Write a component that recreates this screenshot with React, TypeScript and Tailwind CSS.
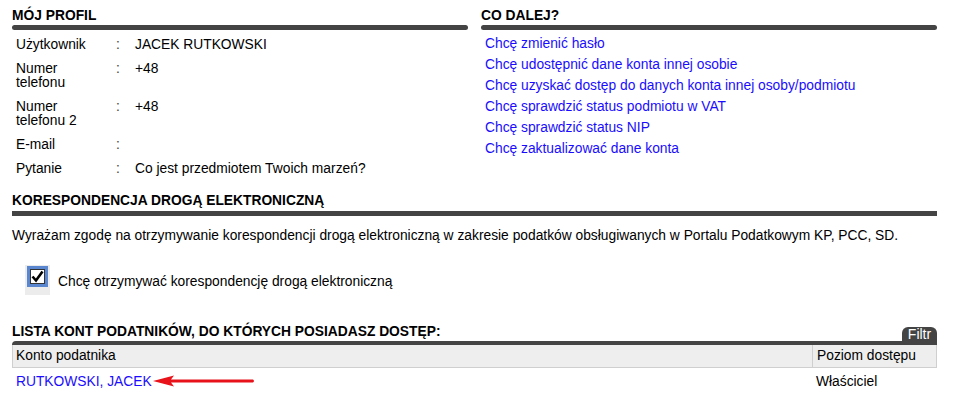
import React from "react";

const links = [
  "Chcę zmienić hasło",
  "Chcę udostępnić dane konta innej osobie",
  "Chcę uzyskać dostęp do danych konta innej osoby/podmiotu",
  "Chcę sprawdzić status podmiotu w VAT",
  "Chcę sprawdzić status NIP",
  "Chcę zaktualizować dane konta",
];

const profile: [string, string][] = [
  ["Użytkownik", "JACEK RUTKOWSKI"],
  ["Numer telefonu", "+48"],
  ["Numer telefonu 2", "+48"],
  ["E-mail", ""],
  ["Pytanie", "Co jest przedmiotem Twoich marzeń?"],
];

function Heading({ children }: { children: React.ReactNode }) {
  return <div className="text-[13.8px] leading-[15px] font-bold text-black whitespace-nowrap">{children}</div>;
}

export default function App() {
  return (
    <div
      className="bg-white w-[974px] h-[419px] text-[13.8px] text-black"
      style={{ fontFamily: '"Liberation Sans", Arial, sans-serif' }}
    >
      <div className="ml-[12px] w-[925px] pt-[8px]">
        <div className="grid grid-cols-[456px_456px] gap-x-[13px]">
          <div>
            <Heading>MÓJ PROFIL</Heading>
            <div className="mt-[2px] h-[5px] rounded-full bg-[#444]" />
            <div className="mt-[3px] grid grid-cols-[104px_19px_1fr]">
              {profile.map(([k, v]) => (
                <React.Fragment key={k}>
                  <div className="pl-[4px] pr-[8px] py-[5px] leading-[14px]">{k}</div>
                  <div className="py-[5px] leading-[14px] text-[#444]">:</div>
                  <div className="py-[5px] leading-[14px]">{v}</div>
                </React.Fragment>
              ))}
            </div>
          </div>
          <div>
            <Heading>CO DALEJ?</Heading>
            <div className="mt-[2px] h-[5px] rounded-full bg-[#444]" />
            <div className="mt-[3px] pl-[4px] flex flex-col items-start">
              {links.map((l) => (
                <a key={l} href="#" className="text-[#1a0dff] leading-[21px] h-[21px] whitespace-nowrap">
                  {l}
                </a>
              ))}
            </div>
          </div>
        </div>

        <div className="mt-[12px]">
          <Heading>KORESPONDENCJA DROGĄ ELEKTRONICZNĄ</Heading>
          <div className="mt-[3px] h-[5px] bg-[#444]" />
          <p className="mt-[12px] leading-[15px] whitespace-nowrap">
            Wyrażam zgodę na otrzymywanie korespondencji drogą elektroniczną w zakresie podatków obsługiwanych w Portalu Podatkowym KP, PCC, SD.
          </p>
          <div className="mt-[22px] flex items-start">
            <div className="ml-[13px] w-[25px] h-[30px] bg-[#ececec] flex justify-center pt-[1px]">
              <div className="w-[21px] h-[21px] bg-[#5a86cf] flex items-center justify-center">
                <div className="w-[15px] h-[15px] bg-white border border-[#333] flex items-center justify-center">
                  <svg width="13" height="13" viewBox="0 0 13 13">
                    <path d="M1.5 6.5 L5 10.5 L11.5 1.5" stroke="#000" strokeWidth="2.6" fill="none" strokeLinejoin="miter" />
                  </svg>
                </div>
              </div>
            </div>
            <span className="ml-[8px] mt-[9px] leading-[15px]">Chcę otrzymywać korespondencję drogą elektroniczną</span>
          </div>
        </div>

        <div className="mt-[29px]">
          <div className="flex items-end justify-between">
            <div className="mb-[2px]">
              <Heading>LISTA KONT PODATNIKÓW, DO KTÓRYCH POSIADASZ DOSTĘP:</Heading>
            </div>
            <div className="w-[35px] h-[14px] rounded-t-[6px] bg-[#444] text-white text-[14px] leading-[15px] text-center overflow-hidden">
              Filtr
            </div>
          </div>
          <div className="h-[4px] bg-[#444] rounded-tl-[5px]" />
          <div className="flex bg-[#eeeeee] border border-t-0 border-[#cfcfcf] h-[23px]">
            <div className="w-[799px] pl-[3px] leading-[22px]">Konto podatnika</div>
            <div className="flex-1 border-l border-[#cfcfcf] pl-[4px] leading-[22px]">Poziom dostępu</div>
          </div>
          <div className="flex h-[26px] items-center">
            <div className="w-[800px] pl-[4px] flex items-center">
              <a href="#" className="text-[#1a0dff] leading-[15px]">RUTKOWSKI, JACEK</a>
              <svg width="104" height="12" viewBox="0 0 104 12" className="ml-[1px]">
                <path d="M0 6 L21 0.5 L18 4.5 L100 4.5 Q102 6 100 7.5 L18 7.5 L21 11.5 Z" fill="#e8121a" />
              </svg>
            </div>
            <div className="pl-[4px] leading-[15px]">Właściciel</div>
          </div>
        </div>
      </div>
    </div>
  );
}
